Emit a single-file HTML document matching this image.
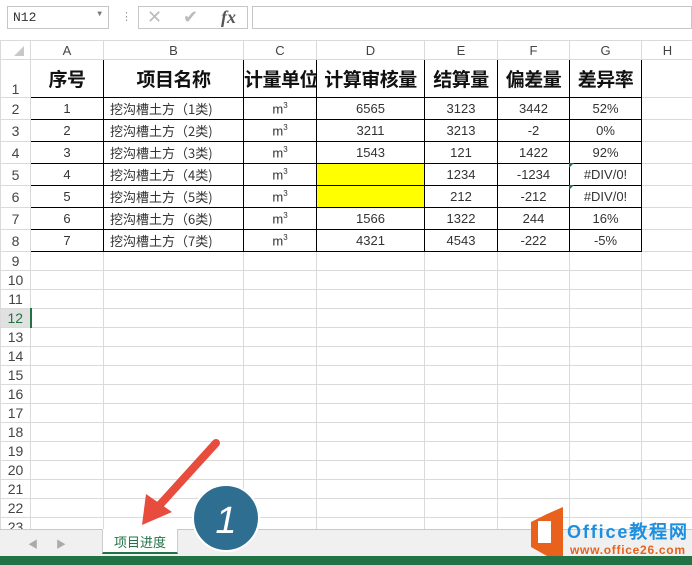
<!DOCTYPE html>
<html><head><meta charset="utf-8"><style>
*{margin:0;padding:0;box-sizing:border-box}
body{width:692px;height:565px;overflow:hidden;background:#fff;font-family:"Liberation Sans","Noto Sans CJK SC",sans-serif;position:relative}
.top{position:absolute;left:0;top:0;width:692px;height:40px;background:#fff}
.nb{position:absolute;left:7px;top:6px;width:102px;height:23px;border:1px solid #c6c6c6;font-size:13px;font-family:"Liberation Mono",monospace;color:#333;padding:3px 0 0 5px}
.nb span{position:absolute;right:6px;top:3px;font-size:8px;color:#777}
.fx{position:absolute;left:138px;top:6px;width:110px;height:23px;border:1px solid #c6c6c6;color:#bbb;font-size:18px}
.fb{position:absolute;left:252px;top:6px;width:440px;height:23px;border:1px solid #c6c6c6}
table{position:absolute;left:0;top:40px;width:693px;border-collapse:collapse;table-layout:fixed;font-size:13px;color:#333}
td{border:1px solid #dadada;text-align:center;height:19px;padding:0;white-space:nowrap;overflow:hidden}
tr.h td{height:19px;background:#fff;color:#444;border-color:#dadada;font-size:13px}
td.r{color:#444;font-size:14px;text-align:center}
tr.t td.d{border:1px solid #000}
tr.t td{height:22px}
tr.hd td{height:38px}
tr.hd td.d{font-size:19px;font-weight:bold;font-family:"Noto Sans CJK SC",sans-serif;vertical-align:middle;color:#111;letter-spacing:-0.5px}
td.l{text-align:left;padding-left:6px;font-family:"Noto Sans CJK SC",sans-serif}
td.y{background:#ffff00}
sup{font-size:8px}
.tabs{position:absolute;left:0;top:529px;width:692px;height:27px;background:#f0f0f0;border-top:1px solid #c8c8c8}
.tab{position:absolute;left:102px;top:-1px;width:76px;height:25px;background:#fff;border-bottom:2px solid #217346;border-left:1px solid #ccc;border-right:1px solid #ccc;color:#217346;font-size:13px;text-align:center;padding-top:3px;font-family:"Noto Sans CJK SC",sans-serif}
.status{position:absolute;left:0;top:556px;width:692px;height:9px;background:#217346}
</style></head><body>
<div class="top">
<div class="nb">N12<span>▼</span></div>
<div style="position:absolute;left:121px;top:10px;color:#999;font-size:11px">⋮</div>
<div class="fx"><span style="position:absolute;left:8px;top:0">✕</span><span style="position:absolute;left:44px;top:0">✔</span><span style="position:absolute;left:82px;top:0;color:#555;font-family:'Liberation Serif',serif;font-style:italic;font-weight:bold">fx</span></div>
<div class="fb"></div>
</div>
<table>
<colgroup><col style="width:30px"><col style="width:73px"><col style="width:140px"><col style="width:73px"><col style="width:108px"><col style="width:73px"><col style="width:72px"><col style="width:72px"><col style="width:52px"></colgroup>
<tr class="h"><td style="background:#fff"></td><td>A</td><td>B</td><td>C</td><td>D</td><td>E</td><td>F</td><td>G</td><td>H</td></tr>
<tr class="hd t"><td class="r" style="vertical-align:bottom">1</td><td class="d">序号</td><td class="d">项目名称</td><td class="d">计量单位</td><td class="d">计算审核量</td><td class="d">结算量</td><td class="d">偏差量</td><td class="d">差异率</td><td></td></tr>
<tr class="t"><td class="r">2</td><td class="d">1</td><td class="d l">挖沟槽土方（1类)</td><td class="d">m<sup>3</sup></td><td class="d">6565</td><td class="d">3123</td><td class="d">3442</td><td class="d">52%</td><td></td></tr>
<tr class="t"><td class="r">3</td><td class="d">2</td><td class="d l">挖沟槽土方（2类)</td><td class="d">m<sup>3</sup></td><td class="d">3211</td><td class="d">3213</td><td class="d">-2</td><td class="d">0%</td><td></td></tr>
<tr class="t"><td class="r">4</td><td class="d">3</td><td class="d l">挖沟槽土方（3类)</td><td class="d">m<sup>3</sup></td><td class="d">1543</td><td class="d">121</td><td class="d">1422</td><td class="d">92%</td><td></td></tr>
<tr class="t"><td class="r">5</td><td class="d">4</td><td class="d l">挖沟槽土方（4类)</td><td class="d">m<sup>3</sup></td><td class="d y"></td><td class="d">1234</td><td class="d">-1234</td><td class="d">#DIV/0!</td><td></td></tr>
<tr class="t"><td class="r">6</td><td class="d">5</td><td class="d l">挖沟槽土方（5类)</td><td class="d">m<sup>3</sup></td><td class="d y"></td><td class="d">212</td><td class="d">-212</td><td class="d">#DIV/0!</td><td></td></tr>
<tr class="t"><td class="r">7</td><td class="d">6</td><td class="d l">挖沟槽土方（6类)</td><td class="d">m<sup>3</sup></td><td class="d">1566</td><td class="d">1322</td><td class="d">244</td><td class="d">16%</td><td></td></tr>
<tr class="t"><td class="r">8</td><td class="d">7</td><td class="d l">挖沟槽土方（7类)</td><td class="d">m<sup>3</sup></td><td class="d">4321</td><td class="d">4543</td><td class="d">-222</td><td class="d">-5%</td><td></td></tr>
<tr><td class="r">9</td><td></td><td></td><td></td><td></td><td></td><td></td><td></td><td></td></tr>
<tr><td class="r">10</td><td></td><td></td><td></td><td></td><td></td><td></td><td></td><td></td></tr>
<tr><td class="r">11</td><td></td><td></td><td></td><td></td><td></td><td></td><td></td><td></td></tr>
<tr><td class="r" style="background:#e1e1e1;color:#217346;border-right:2px solid #217346">12</td><td></td><td></td><td></td><td></td><td></td><td></td><td></td><td></td></tr>
<tr><td class="r">13</td><td></td><td></td><td></td><td></td><td></td><td></td><td></td><td></td></tr>
<tr><td class="r">14</td><td></td><td></td><td></td><td></td><td></td><td></td><td></td><td></td></tr>
<tr><td class="r">15</td><td></td><td></td><td></td><td></td><td></td><td></td><td></td><td></td></tr>
<tr><td class="r">16</td><td></td><td></td><td></td><td></td><td></td><td></td><td></td><td></td></tr>
<tr><td class="r">17</td><td></td><td></td><td></td><td></td><td></td><td></td><td></td><td></td></tr>
<tr><td class="r">18</td><td></td><td></td><td></td><td></td><td></td><td></td><td></td><td></td></tr>
<tr><td class="r">19</td><td></td><td></td><td></td><td></td><td></td><td></td><td></td><td></td></tr>
<tr><td class="r">20</td><td></td><td></td><td></td><td></td><td></td><td></td><td></td><td></td></tr>
<tr><td class="r">21</td><td></td><td></td><td></td><td></td><td></td><td></td><td></td><td></td></tr>
<tr><td class="r">22</td><td></td><td></td><td></td><td></td><td></td><td></td><td></td><td></td></tr>
<tr><td class="r">23</td><td></td><td></td><td></td><td></td><td></td><td></td><td></td><td></td></tr>
</table>
<svg style="position:absolute;left:0;top:40px" width="30" height="19"><polygon points="24,6 24,16 14,16" fill="#c8c8c8"/></svg>
<div class="tabs">
<span style="position:absolute;left:28px;top:6px;color:#aaa;font-size:10px">◀</span>
<span style="position:absolute;left:56px;top:6px;color:#aaa;font-size:10px">▶</span>
<div class="tab">项目进度</div>
</div>
<div class="status"></div>
<svg style="position:absolute;left:0;top:0" width="692" height="565">
<line x1="216" y1="443" x2="157" y2="508" stroke="#e84c3d" stroke-width="8" stroke-linecap="round"/>
<polygon points="142,525 146,494 172,512" fill="#e84c3d"/>
<circle cx="226" cy="518" r="33" fill="#2e6e91" stroke="#fff" stroke-width="2"/>
<text x="226" y="533" font-family="Liberation Sans" font-size="38" fill="#fff" text-anchor="middle" font-style="italic">1</text>
<polygon points="531,522 547,514 563,507 563,556 547,556 531,547" fill="#e8621d"/>
<rect x="538" y="521" width="13" height="22" fill="#fff"/>
<text x="567" y="538" font-family="Liberation Sans" font-size="18" font-weight="bold" fill="#1e8fde" textLength="120">Office教程网</text>
<text x="570" y="554" font-family="Liberation Sans" font-size="12" font-weight="bold" fill="#e8621d" textLength="115">www.office26.com</text>
</svg>
<svg style="position:absolute;left:569px;top:163px" width="6" height="6"><polygon points="0,0 5,0 0,5" fill="#217346"/></svg>
<svg style="position:absolute;left:569px;top:185px" width="6" height="6"><polygon points="0,0 5,0 0,5" fill="#217346"/></svg>
</body></html>
